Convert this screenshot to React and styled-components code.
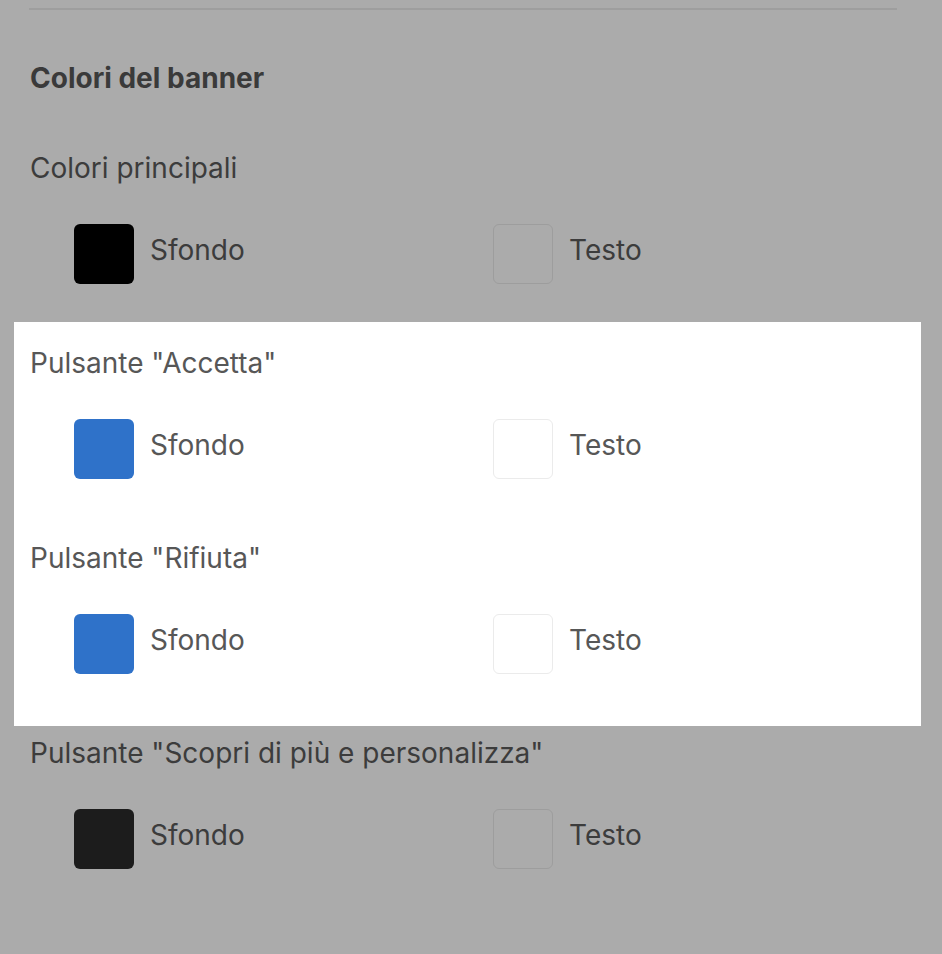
import React from 'react';
import styled, { createGlobalStyle } from 'styled-components';

const GlobalStyle = createGlobalStyle`
    html, body {
        margin: 0;
        padding: 0;
        background: #ababab;
    }
    body {
        font-family: Inter, "Liberation Sans", sans-serif;
    }
`;

const groups = [
    { title: 'Colori principali', bg: '#000000', text: '#ffffff' },
    { title: 'Pulsante "Accetta"', bg: '#2f72c9', text: '#ffffff', spot: true },
    { title: 'Pulsante "Rifiuta"', bg: '#2f72c9', text: '#ffffff', spot: true },
    { title: 'Pulsante "Scopri di più e personalizza"', bg: '#1c1c1c', text: '#ffffff' }
];

const Page = styled.div`
    width: 868px;
    margin-left: 29px;
    padding-top: 8px;
    padding-bottom: 60px;
`;

const Divider = styled.hr`
    margin: 0;
    border: none;
    height: 2px;
    background: #9e9e9e;
`;

const Heading = styled.h3`
    margin: 50px 0 54px 1px;
    font-size: 28px;
    line-height: 36px;
    font-weight: 700;
    color: #3a3a3a;
`;

const Groups = styled.div`
    display: flex;
    flex-direction: column;
    gap: 61px;
`;

const Spotlight = styled.div`
    display: flex;
    flex-direction: column;
    gap: 61px;
    background: #ffffff;
    margin: -23px -24px -52px -15px;
    padding: 23px 24px 52px 15px;
`;

const Group = styled.div`
    display: flex;
    flex-direction: column;
    gap: 38px;
    color: ${p => (p.$lit ? '#575757' : '#3c3c3c')};
`;

const Label = styled.div`
    font-size: 28px;
    line-height: 36px;
    padding-left: 1px;
`;

const SwatchRow = styled.div`
    display: grid;
    grid-template-columns: 419px 1fr;
    padding-left: 45px;
`;

const Picker = styled.div`
    display: flex;
    align-items: center;
    gap: 16px;
    height: 60px;
    font-size: 28px;
    line-height: 36px;
`;

const PickerName = styled.span`
    padding-bottom: 8px;
`;

const Swatch = styled.div`
    width: 60px;
    height: 60px;
    box-sizing: border-box;
    border-radius: 6px;
    background: ${p => p.$color};
    border: 1px solid ${p => (p.$light ? (p.$lit ? '#ebebeb' : '#9d9d9d') : 'transparent')};
    ${p => p.$light && !p.$lit && 'background: transparent;'}
`;

function ColorGroup({ group }) {
    const lit = !!group.spot;
    return (
        <Group $lit={lit}>
            <Label>{group.title}</Label>
            <SwatchRow>
                <Picker>
                    <Swatch $color={group.bg} $lit={lit} />
                    <PickerName>Sfondo</PickerName>
                </Picker>
                <Picker>
                    <Swatch $color={group.text} $light $lit={lit} />
                    <PickerName>Testo</PickerName>
                </Picker>
            </SwatchRow>
        </Group>
    );
}

export default function App() {
    const [first, accept, reject, more] = groups;
    return (
        <Page>
            <GlobalStyle />
            <Divider />
            <Heading>Colori del banner</Heading>
            <Groups>
                <ColorGroup group={first} />
                <Spotlight>
                    <ColorGroup group={accept} />
                    <ColorGroup group={reject} />
                </Spotlight>
                <ColorGroup group={more} />
            </Groups>
        </Page>
    );
}
